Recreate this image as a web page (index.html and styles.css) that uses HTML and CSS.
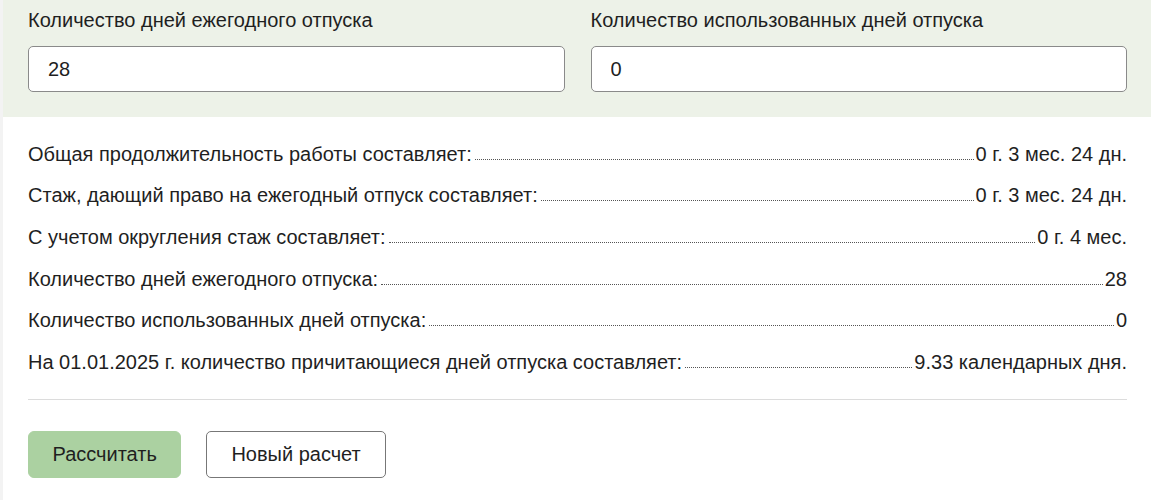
FILE: index.html
```html
<!DOCTYPE html>
<html>
	<head>
		<meta charset="UTF-8"/>
		<title>Калькулятор отпуска</title>
		<link rel="stylesheet" href="styles.css">
	</head>
	<body>
		<div class="calc">
			<div class="inputs">
				<div class="field">
					<label for="days">Количество дней ежегодного отпуска</label>
					<input id="days" type="text" value="28">
				</div>
				<div class="field">
					<label for="used">Количество использованных дней отпуска</label>
					<input id="used" type="text" value="0">
				</div>
			</div>
			<div class="result">
				<div class="row">
					<span class="name">Общая продолжительность работы составляет:</span>
					<span class="dots"></span>
					<span class="value">0 г. 3 мес. 24 дн.</span>
				</div>
				<div class="row">
					<span class="name">Стаж, дающий право на ежегодный отпуск составляет:</span>
					<span class="dots"></span>
					<span class="value">0 г. 3 мес. 24 дн.</span>
				</div>
				<div class="row">
					<span class="name">С учетом округления стаж составляет:</span>
					<span class="dots"></span>
					<span class="value">0 г. 4 мес.</span>
				</div>
				<div class="row">
					<span class="name">Количество дней ежегодного отпуска:</span>
					<span class="dots"></span>
					<span class="value">28</span>
				</div>
				<div class="row">
					<span class="name">Количество использованных дней отпуска:</span>
					<span class="dots"></span>
					<span class="value">0</span>
				</div>
				<div class="row">
					<span class="name">На 01.01.2025 г. количество причитающиеся дней отпуска составляет:</span>
					<span class="dots"></span>
					<span class="value">9.33 календарных дня.</span>
				</div>
				<hr>
				<div class="buttons">
					<button class="btn calc-btn">Рассчитать</button>
					<button class="btn reset-btn">Новый расчет</button>
				</div>
			</div>
		</div>
	</body>
</html>
```
FILE: styles.css
```css
* {
	margin: 0;
	padding: 0;
	box-sizing: border-box;
}
html, body {
	height: 100%;
}
body {
	background: #f3f3f3;
	font-family: "Liberation Sans", Arial, sans-serif;
	color: #1f1f1f;
}
.calc {
	margin-left: 3px;
	min-height: 100%;
	background: #ffffff;
}
.inputs {
	display: grid;
	grid-template-columns: 1fr 1fr;
	gap: 26px;
	padding: 9px 24px 25px 25px;
	background: #edf2e8;
}
.field label {
	display: block;
	font-size: 20px;
	line-height: 22px;
	margin-bottom: 15px;
}
.field input {
	display: block;
	width: 100%;
	height: 46px;
	padding: 0 19px;
	border: 1px solid #8a8a8a;
	border-radius: 5px;
	background: #ffffff;
	font-family: inherit;
	font-size: 20px;
	color: #1f1f1f;
}
.result {
	padding: 16px 24px 0 25px;
}
.row {
	display: flex;
	align-items: flex-end;
	padding: 9.8px 0;
	font-size: 20px;
	line-height: 22px;
}
.row .dots {
	flex: 1;
	margin: 0 2px 5px 3px;
	border-bottom: 1px dotted #555;
}
.result hr {
	border: none;
	border-top: 1px solid #dcdcdc;
	margin: 16px 0 31px;
}
.buttons {
	display: flex;
	gap: 25px;
}
.btn {
	height: 47px;
	padding: 0 24px;
	border-radius: 6px;
	font-family: inherit;
	font-size: 20px;
	color: #1f1f1f;
	cursor: pointer;
}
.calc-btn {
	padding: 0 23.5px;
	background: #abd1a1;
	border: 1px solid #abd1a1;
}
.reset-btn {
	background: #ffffff;
	border: 1px solid #777777;
	border-radius: 5px;
}
```
